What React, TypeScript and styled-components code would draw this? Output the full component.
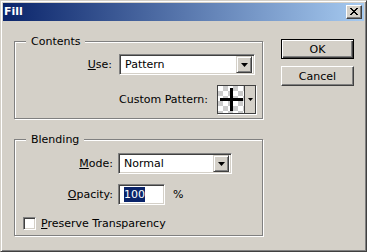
import React from 'react';
import styled, { createGlobalStyle } from 'styled-components';

const Global = createGlobalStyle`
  *, *::before, *::after { box-sizing: border-box; }
  html, body { margin: 0; padding: 0; background: #d4d0c8; }
  body {
    font-family: "DejaVu Sans", Tahoma, sans-serif;
    font-size: 11px;
    color: #000;
  }
`;

const Window = styled.div`
  width: 367px;
  height: 252px;
  border: 1px solid;
  border-color: #d4d0c8 #404040 #404040 #d4d0c8;
  box-shadow: inset 1px 1px 0 #fff, inset -1px -1px 0 #808080;
  padding: 2px;
  background: #d4d0c8;
  display: flex;
  flex-direction: column;
`;

const TitleBar = styled.div`
  height: 18px;
  flex: none;
  background: linear-gradient(to right, #0a246a, #a6caf0);
  display: flex;
  align-items: center;
  justify-content: space-between;
  padding: 0 2px 0 1px;
`;

const Title = styled.span`
  color: #fff;
  font-weight: bold;
  font-size: 11px;
  line-height: 18px;
`;

const CloseButton = styled.div`
  width: 16px;
  height: 14px;
  border: 1px solid;
  border-color: #fff #404040 #404040 #fff;
  box-shadow: inset -1px -1px 0 #808080;
  background: #d4d0c8;
  display: flex;
  align-items: center;
  justify-content: center;
  padding: 0 1px 1px 0;
`;

const Client = styled.div`
  flex: 1;
  display: flex;
  padding: 18px 0 0 11px;
  gap: 18px;
`;

const LeftCol = styled.div`
  width: 249px;
  margin-top: 2px;
  display: flex;
  flex-direction: column;
  gap: 20px;
`;

const Group = styled.div<{ $h: number }>`
  position: relative;
  height: ${(p) => p.$h}px;
  border: 1px solid #808080;
  box-shadow: 1px 1px 0 #fff, inset 1px 1px 0 #fff;
`;

const Legend = styled.span`
  position: absolute;
  top: -7px;
  left: 11px;
  padding: 0 5px;
  line-height: 13px;
  background: #d4d0c8;
`;

const GroupBody = styled.div<{ $pt: number }>`
  padding-top: ${(p) => p.$pt}px;
  display: flex;
  flex-direction: column;
`;

const FormRow = styled.div<{ $label: number; $gap: number; $mt?: number }>`
  display: grid;
  grid-template-columns: ${(p) => p.$label}px auto;
  column-gap: ${(p) => p.$gap}px;
  align-items: center;
  margin-top: ${(p) => p.$mt ?? 0}px;
`;

const Label = styled.span`
  text-align: right;
  white-space: nowrap;
`;

const EndRow = styled.div`
  display: flex;
  justify-content: flex-end;
  align-items: center;
  gap: 9px;
  padding-right: 6px;
  margin-top: 10px;
`;

const Select = styled.div<{ $w: number }>`
  width: ${(p) => p.$w}px;
  height: 21px;
  border: 1px solid;
  border-color: #808080 #fff #fff #808080;
  box-shadow: inset 1px 1px 0 #404040, inset -1px -1px 0 #d4d0c8;
  background: #fff;
  display: flex;
  align-items: center;
  padding: 2px;
`;

const SelectText = styled.span`
  padding-left: 3px;
  flex: 1;
  white-space: nowrap;
`;

const DropButton = styled.div`
  width: 16px;
  height: 17px;
  border: 1px solid;
  border-color: #d4d0c8 #404040 #404040 #d4d0c8;
  box-shadow: inset 1px 1px 0 #fff, inset -1px -1px 0 #808080;
  background: #d4d0c8;
  display: flex;
  align-items: center;
  justify-content: center;
`;

const Swatch = styled.div`
  width: 39px;
  height: 29px;
  border: 1px solid #404040;
  box-shadow: 1px 1px 0 #fff;
  display: flex;
`;

const PatternBox = styled.div`
  width: 27px;
  height: 100%;
  background-color: #fff;
  background-image: linear-gradient(45deg, #cbcbcb 25%, transparent 25%, transparent 75%, #cbcbcb 75%),
    linear-gradient(45deg, #cbcbcb 25%, transparent 25%, transparent 75%, #cbcbcb 75%);
  background-size: 10px 10px;
  background-position: 0 0, 5px 5px;
  border-right: 1px solid #404040;
  display: flex;
  align-items: center;
  justify-content: center;
`;

const SwatchArrow = styled.div`
  flex: 1;
  background: #d4d0c8;
  display: flex;
  align-items: center;
  justify-content: center;
`;

const TextField = styled.div`
  width: 47px;
  height: 21px;
  border: 1px solid;
  border-color: #808080 #fff #fff #808080;
  box-shadow: inset 1px 1px 0 #404040, inset -1px -1px 0 #d4d0c8;
  background: #fff;
  display: flex;
  align-items: center;
  padding: 2px 2px 2px 5px;
`;

const Selected = styled.span`
  background: #0a246a;
  color: #fff;
  line-height: 15px;
`;

const FieldGroup = styled.div`
  display: flex;
  align-items: center;
  gap: 8px;
`;

const CheckRow = styled.label`
  display: flex;
  align-items: center;
  gap: 5px;
  padding-left: 8px;
  margin-top: 12px;
`;

const CheckBox = styled.span`
  width: 13px;
  height: 13px;
  border: 1px solid;
  border-color: #808080 #fff #fff #808080;
  box-shadow: inset 1px 1px 0 #404040, inset -1px -1px 0 #d4d0c8;
  background: #fff;
`;

const RightCol = styled.div`
  width: 73px;
  display: flex;
  flex-direction: column;
  gap: 7px;
`;

const Button = styled.div<{ $default?: boolean }>`
  height: 20px;
  display: flex;
  align-items: center;
  justify-content: center;
  background: #d4d0c8;
  border: 1px solid;
  border-color: ${(p) => (p.$default ? '#000' : '#fff #404040 #404040 #fff')};
  box-shadow: ${(p) =>
    p.$default
      ? 'inset 1px 1px 0 #fff, inset -1px -1px 0 #404040, inset -2px -2px 0 #808080'
      : 'inset -1px -1px 0 #808080'};
`;

const Arrow = () => (
  <svg width="7" height="4" viewBox="0 0 7 4">
    <polygon points="0,0 7,0 3.5,4" fill="#000" />
  </svg>
);

const SmallArrow = () => (
  <svg width="5" height="3" viewBox="0 0 5 3">
    <polygon points="0,0 5,0 2.5,3" fill="#000" />
  </svg>
);

const CloseX = () => (
  <svg width="8" height="7" viewBox="0 0 8 7" shapeRendering="crispEdges">
    <path d="M0 0h2v1h-2zM6 0h2v1h-2zM1 1h2v1h-2zM5 1h2v1h-2zM2 2h4v1h-4zM3 3h2v1h-2zM2 4h4v1h-4zM1 5h2v1h-2zM5 5h2v1h-2zM0 6h2v1h-2zM6 6h2v1h-2z" fill="#000" />
  </svg>
);

const Cross = () => (
  <svg width="25" height="25" viewBox="0 0 25 25" shapeRendering="crispEdges">
    <rect x="11" y="1" width="3" height="23" fill="#000" />
    <rect x="1" y="11" width="23" height="3" fill="#000" />
  </svg>
);

export default function App() {
  return (
    <>
      <Global />
      <Window>
        <TitleBar>
          <Title>Fill</Title>
          <CloseButton>
            <CloseX />
          </CloseButton>
        </TitleBar>
        <Client>
          <LeftCol>
            <Group $h={78}>
              <Legend>Contents</Legend>
              <GroupBody $pt={12}>
                <FormRow $label={97} $gap={7}>
                  <Label>
                    <u>U</u>se:
                  </Label>
                  <Select $w={136}>
                    <SelectText>Pattern</SelectText>
                    <DropButton>
                      <Arrow />
                    </DropButton>
                  </Select>
                </FormRow>
                <EndRow>
                  <Label>Custom Pattern:</Label>
                  <Swatch>
                    <PatternBox>
                      <Cross />
                    </PatternBox>
                    <SwatchArrow>
                      <SmallArrow />
                    </SwatchArrow>
                  </Swatch>
                </EndRow>
              </GroupBody>
            </Group>
            <Group $h={97}>
              <Legend>Blending</Legend>
              <GroupBody $pt={13}>
                <FormRow $label={98} $gap={5}>
                  <Label>
                    <u>M</u>ode:
                  </Label>
                  <Select $w={114}>
                    <SelectText>Normal</SelectText>
                    <DropButton>
                      <Arrow />
                    </DropButton>
                  </Select>
                </FormRow>
                <FormRow $label={98} $gap={5} $mt={10}>
                  <Label>
                    <u>O</u>pacity:
                  </Label>
                  <FieldGroup>
                    <TextField>
                      <Selected>100</Selected>
                    </TextField>
                    <span>%</span>
                  </FieldGroup>
                </FormRow>
                <CheckRow>
                  <CheckBox />
                  <span>
                    <u>P</u>reserve Transparency
                  </span>
                </CheckRow>
              </GroupBody>
            </Group>
          </LeftCol>
          <RightCol>
            <Button $default>OK</Button>
            <Button>Cancel</Button>
          </RightCol>
        </Client>
      </Window>
    </>
  );
}
